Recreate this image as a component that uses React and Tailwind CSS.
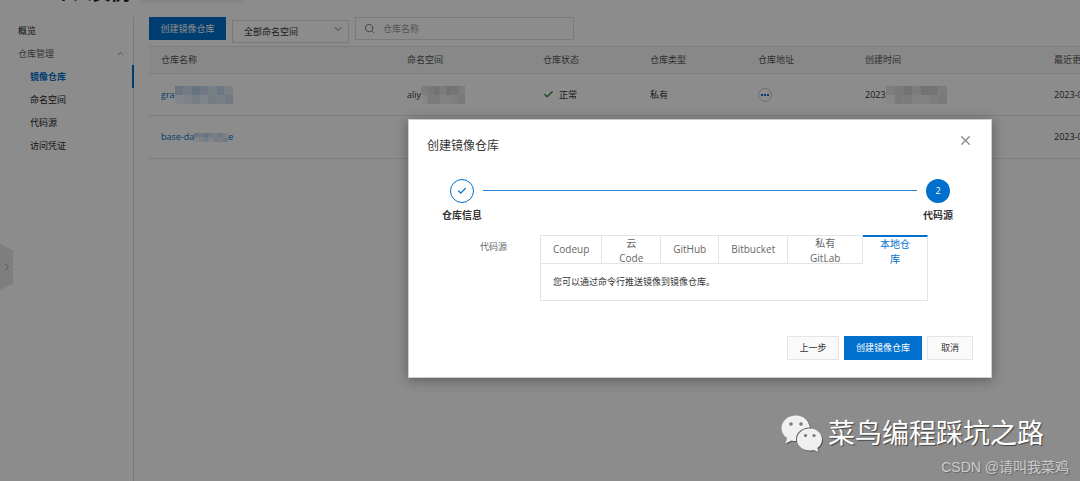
import { useState } from 'react';
import { Check, ChevronDown, ChevronRight, ChevronUp, Search, X } from 'lucide-react';

const navItems = ['镜像仓库', '命名空间', '代码源', '访问凭证'];

const sources = ['Codeup', '云Code', 'GitHub', 'Bitbucket', '私有GitLab', '本地仓库'];

const Blur = ({ tone = 'gray', className }) => {
  const blue = ['#c3d5ea', '#d3dfee', '#b9cfe9', '#cddcf0', '#dbe6f3', '#c6d8ee', '#e3ebf5'];
  const gray = ['#e3e3e3', '#dcdcdc', '#d2d2d2', '#e2e2e2', '#d0d0d0', '#d4d4d4', '#e0e4e2'];
  const colors = tone === 'blue' ? blue : gray;
  return (
    <svg viewBox="0 0 56 18" preserveAspectRatio="none" className={className} aria-hidden="true">
      {colors.map((c, i) => (
        <g key={i}>
          <rect x={i * 8} y={0} width={8} height={9} fill={c} />
          <rect x={i * 8} y={9} width={8} height={9} fill={colors[(i + 3) % 7]} opacity={i === 0 ? 0.3 : 0.7} />
        </g>
      ))}
    </svg>
  );
};

const Header = () => (
  <header className="flex h-[17px] items-start overflow-hidden pl-[54px]">
    <div className="flex h-[3px] items-end overflow-hidden">
      <h1 className="text-[19px] leading-[20px] font-bold text-[#222]">个人实例</h1>
    </div>
    <div className="ml-[11px] h-[3px] w-[104px] bg-[#eff2f7]" />
  </header>
);

const Sidebar = () => (
  <nav className="w-[134px] shrink-0 border-r border-[#dcdcdc] pt-[2px] text-[9px] leading-[23px] text-[#222]">
    <a href="#overview" className="block pl-[18px]">概览</a>
    <button type="button" className="flex w-full items-center justify-between pr-2 pl-[18px] text-[#666]">
      仓库管理
      <ChevronUp size={9} />
    </button>
    <ul>
      {navItems.map((item, i) => (
        <li key={item}>
          <a
            href="#nav"
            className={
              i === 0
                ? '-mr-px block border-r-2 border-[#0070cc] pl-[30px] font-bold text-[#0070cc]'
                : 'block pl-[30px]'
            }
          >
            {item}
          </a>
        </li>
      ))}
    </ul>
  </nav>
);

const Toolbar = () => (
  <div className="flex h-[23px] gap-[6px]">
    <button type="button" className="w-[77px] bg-[#0070cc] text-[9px] text-white">创建镜像仓库</button>
    <div className="relative w-[117px]">
      <select aria-label="命名空间" className="h-full w-full appearance-none border border-[#dedede] pl-[11px] text-[9px] text-[#333]">
        <option>全部命名空间</option>
      </select>
      <ChevronDown size={12} className="pointer-events-none absolute top-[6px] right-[5px] text-[#777]" />
    </div>
    <label className="flex w-[219px] items-center gap-[8px] border border-[#dedede] pl-[8px]">
      <Search size={11} className="text-[#777]" />
      <input
        type="text"
        aria-label="仓库名称"
        placeholder="仓库名称"
        className="min-w-0 flex-1 text-[9px] outline-none placeholder:text-[#999]"
      />
    </label>
  </div>
);

const RepoTable = () => (
  <table className="mt-[6px] w-[1060px] table-fixed border-collapse text-left text-[9px] text-[#333]">
    <colgroup>
      <col className="w-[246px]" />
      <col className="w-[136px]" />
      <col className="w-[107px]" />
      <col className="w-[108px]" />
      <col className="w-[107px]" />
      <col className="w-[189px]" />
      <col />
    </colgroup>
    <thead>
      <tr className="h-[27px] border-y border-[#e5e5e5] bg-[#f8f8f8] text-[#555]">
        {['仓库名称', '命名空间', '仓库状态', '仓库类型', '仓库地址', '创建时间', '最近更新时间'].map((h) => (
          <th key={h} className="pl-[12px] font-normal">{h}</th>
        ))}
      </tr>
    </thead>
    <tbody>
      <tr className="h-[42px] border-b border-[#e5e5e5]">
        <td className="pl-[12px]">
          <a href="#repo" className="flex items-center text-[#0070cc]">
            gra
            <Blur tone="blue" className="h-[18px] w-[58px]" />
          </a>
        </td>
        <td className="pl-[12px]">
          <span className="flex items-center">
            aliy
            <Blur className="h-[18px] w-[44px]" />
          </span>
        </td>
        <td className="pl-[12px]">
          <span className="flex items-center gap-[5px]">
            <Check size={11} strokeWidth={3} className="text-[#1e8e3e]" />
            正常
          </span>
        </td>
        <td className="pl-[12px]">私有</td>
        <td className="pl-[12px]">
          <button
            type="button"
            aria-label="仓库地址"
            className="flex size-[14px] items-center justify-center gap-px rounded-full border border-[#c8c8c8]"
          >
            <i className="size-[2px] bg-[#0070cc]" />
            <i className="size-[2px] bg-[#0070cc]" />
            <i className="size-[2px] bg-[#0070cc]" />
          </button>
        </td>
        <td className="pl-[12px]">
          <span className="flex items-center">
            2023
            <Blur className="h-[18px] w-[61px]" />
          </span>
        </td>
        <td className="pl-[12px]">2023-04-12</td>
      </tr>
      <tr className="h-[43px] border-b border-[#e5e5e5]">
        <td className="pl-[12px]">
          <a href="#repo" className="flex items-center text-[#0070cc]">
            base-da
            <Blur tone="blue" className="h-[9px] w-[34px]" />e
          </a>
        </td>
        <td colSpan={5} />
        <td className="pl-[12px]">2023-04-12</td>
      </tr>
    </tbody>
  </table>
);

const Steps = () => (
  <ol className="mt-[24px] flex items-start text-[10px] leading-[14px] font-bold text-[#333]">
    <li className="flex w-[70px] flex-col items-center gap-[5px]">
      <span className="flex size-6 items-center justify-center rounded-full border border-[#0070cc] text-[#0070cc]">
        <Check size={10} strokeWidth={3} />
      </span>
      仓库信息
    </li>
    <li aria-hidden="true" className="mt-[11px] -ml-[14px] h-px flex-1 bg-[#2a82d0]" />
    <li className="-ml-[14px] flex w-[70px] flex-col items-center gap-[5px]">
      <span className="flex size-6 items-center justify-center rounded-full bg-[#0070cc] text-[9px] font-normal text-white">
        2
      </span>
      代码源
    </li>
  </ol>
);

const SourceTabs = () => {
  const [active, setActive] = useState('本地仓库');
  return (
    <div className="w-[388px]">
      <div role="tablist" className="flex h-[29px] text-[10px] text-[#666]">
        {sources.map((name) => (
          <button
            key={name}
            type="button"
            role="tab"
            aria-selected={active === name}
            onClick={() => setActive(name)}
            className={
              active === name
                ? 'border-t-2 border-r border-t-[#0070cc] border-r-[#e3e4e6] px-[12px] text-[#0070cc]'
                : 'border-t border-r border-b border-[#e3e4e6] px-[12px] first:border-l'
            }
          >
            {name}
          </button>
        ))}
        <span className="flex-1 border-b border-[#e3e4e6]" />
      </div>
      <p className="border-x border-b border-[#e3e4e6] px-[12px] pt-[11px] pb-[11px] text-[9px] leading-[14px] text-[#333]">
        您可以通过命令行推送镜像到镜像仓库。
      </p>
    </div>
  );
};

const Dialog = () => (
  <section
    role="dialog"
    aria-label="创建镜像仓库"
    className="absolute top-[119px] left-1/2 ml-[-132px] w-[584px] border border-[#ccc] bg-white px-[18px] pt-[17px] pb-[17px] shadow-[0_2px_12px_rgba(0,0,0,0.35)]"
  >
    <div className="flex items-start justify-between">
      <h2 className="text-[12px] leading-[18px] text-[#333]">创建镜像仓库</h2>
      <button type="button" aria-label="关闭" className="-mt-[4px] text-[#888]">
        <X size={15} />
      </button>
    </div>
    <Steps />
    <div className="mt-[13px] flex">
      <span className="w-[113px] pt-[5px] pr-[33px] text-right text-[9px] leading-[14px] text-[#666]">代码源</span>
      <SourceTabs />
    </div>
    <div className="mt-[35px] flex h-6 justify-end gap-[5px] text-[9px]">
      <button type="button" className="w-[52px] border border-[#e3e4e6] bg-[#fafafa] text-[#333]">上一步</button>
      <button type="button" className="w-[78px] bg-[#0070cc] text-white">创建镜像仓库</button>
      <button type="button" className="w-[46px] border border-[#e3e4e6] bg-[#fafafa] text-[#333]">取消</button>
    </div>
  </section>
);

const WechatLogo = () => (
  <svg width="42" height="37" viewBox="0 0 42 37" className="drop-shadow-[1px_1px_0_#555]" aria-hidden="true">
    <path
      fill="#f0f0f0"
      d="M15 0.5C6.800 0.500 0.500 6 0.500 13.200c0 4 2.200 7.500 5.600 9.900L4.500 28.500l6-3c1.500.4 3 .6 4.800.6-1.500-7 4.500-13.500 13.700-13.500C28 6 22.500.5 15 .5z"
    />
    <path
      fill="#f0f0f0"
      d="M28.500 13.500c-7 0-12.500 4.700-12.500 11s5.500 11 12.500 11c1.500 0 3-.2 4.300-.6l4.700 2-1.200-4c3-2 4.700-5 4.700-8.400 0-6.300-5.500-11-12.500-11z"
    />
    <circle cx="10" cy="9" r="1.800" fill="#777" />
    <circle cx="20" cy="9" r="1.800" fill="#777" />
    <circle cx="24.500" cy="20.500" r="1.600" fill="#777" />
    <circle cx="33" cy="20.500" r="1.600" fill="#777" />
  </svg>
);

const App = () => (
  <div className="relative min-h-screen overflow-hidden bg-white font-['Open_Sans','Noto_Sans_CJK_SC',sans-serif]">
    <div className="flex min-h-screen flex-col">
      <Header />
      <div className="flex flex-1">
        <Sidebar />
        <main className="min-w-0 flex-1 overflow-hidden pl-[15px]">
          <Toolbar />
          <RepoTable />
        </main>
      </div>
    </div>

    {/* Collapse handle */}
    <button
      type="button"
      aria-label="展开"
      className="absolute top-[244px] left-0 flex h-[46px] w-[13px] items-center justify-center bg-[#e6e6e6] text-[#999] [clip-path:polygon(0_0,100%_14%,100%_86%,0_100%)]"
    >
      <ChevronRight size={12} />
    </button>

    <div className="absolute inset-0 bg-black/45" />
    <Dialog />

    {/* Watermarks */}
    <div className="absolute right-[36px] bottom-[29px] flex items-center gap-[5px]">
      <WechatLogo />
      <span className="text-[27px] leading-[38px] text-white [text-shadow:1px_1px_1px_#444]">菜鸟编程踩坑之路</span>
    </div>
    <span className="absolute right-[11px] bottom-[4px] font-['Liberation_Sans','Noto_Sans_CJK_SC',sans-serif] text-[14px] leading-[20px] text-[#ccc] [text-shadow:1px_1px_1px_#666]">
      CSDN @请叫我菜鸡
    </span>
  </div>
);

export default App;
